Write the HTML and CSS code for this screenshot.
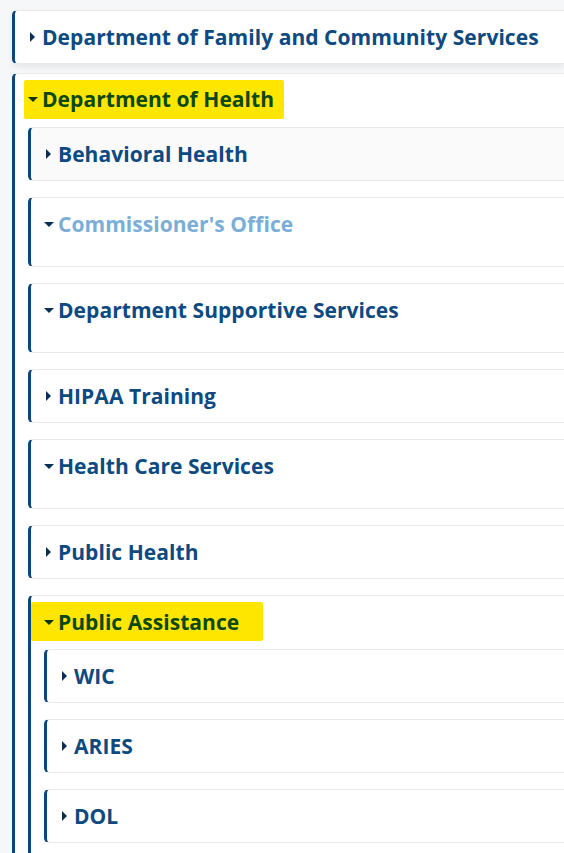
FILE: index.html
```html
<!DOCTYPE html>
<html>
<head>
  <meta charset="UTF-8">
  <title>Departments</title>
  <meta name="viewport" content="width=device-width, initial-scale=1.0">
  <link rel="stylesheet" href="styles.css">
</head>
<body>

<ul class="tree top">
  <li class="node raised">
    <div class="row"><span class="caret right"></span><span class="label">Department of Family and Community Services</span></div>
  </li>
  <li class="node open">
    <div class="row"><span class="hl"><span class="caret down"></span><span class="label">Department of Health</span></span></div>
    <ul class="tree sub">
      <li class="node hover">
        <div class="row"><span class="caret right"></span><span class="label">Behavioral Health</span></div>
      </li>
      <li class="node">
        <div class="row"><span class="caret down"></span><span class="label faded">Commissioner's Office</span></div>
        <div class="empty"></div>
      </li>
      <li class="node">
        <div class="row"><span class="caret down"></span><span class="label">Department Supportive Services</span></div>
        <div class="empty"></div>
      </li>
      <li class="node">
        <div class="row"><span class="caret right"></span><span class="label">HIPAA Training</span></div>
      </li>
      <li class="node">
        <div class="row"><span class="caret down"></span><span class="label">Health Care Services</span></div>
        <div class="empty"></div>
      </li>
      <li class="node">
        <div class="row"><span class="caret right"></span><span class="label">Public Health</span></div>
      </li>
      <li class="node open">
        <div class="row"><span class="hl flush"><span class="caret down"></span><span class="label">Public Assistance</span></span></div>
        <ul class="tree sub">
          <li class="node">
            <div class="row"><span class="caret right"></span><span class="label">WIC</span></div>
          </li>
          <li class="node">
            <div class="row"><span class="caret right"></span><span class="label">ARIES</span></div>
          </li>
          <li class="node">
            <div class="row"><span class="caret right"></span><span class="label">DOL</span></div>
          </li>
        </ul>
      </li>
    </ul>
  </li>
</ul>

</body>
</html>
```

FILE: styles.css
```css
html, body {
  margin: 0;
  padding: 0;
  background: #f6f7f9;
  font-family: "Open Sans", Arial, sans-serif;
  overflow: hidden;
}
.tree {
  list-style: none;
  margin: 0;
  padding: 0;
  display: flex;
  flex-direction: column;
  gap: 16px;
}
.tree.top {
  padding: 10px 0 0 12px;
  gap: 9px;
}
.tree.sub {
  margin-top: 8px;
  padding-left: 13px;
}
.node {
  background: #fff;
  border-left: 3px solid #0a4680;
  border-top: 1px solid #e8e9eb;
  border-bottom: 1px solid #e8e9eb;
  border-radius: 5px 0 0 5px;
}
.node.raised { box-shadow: 0 3px 6px rgba(0,0,0,0.07); }
.node.hover { background: #fafafa; }
.node.open { padding: 6px 0 30px; border-bottom: none; }
.row {
  display: flex;
  align-items: center;
  height: 52px;
  padding-left: 12px;
}
.node.open > .row { height: auto; padding-left: 9px; }
.caret {
  width: 11px;
  flex: none;
  display: flex;
  justify-content: center;
  align-items: center;
  margin-right: 4px;
}
.caret::before {
  content: "";
  width: 0;
  height: 0;
}
.caret.right::before {
  border-top: 5px solid transparent;
  border-bottom: 5px solid transparent;
  border-left: 5px solid #082f57;
}
.caret.down::before {
  border-left: 5px solid transparent;
  border-right: 5px solid transparent;
  border-top: 5px solid #082f57;
}
.label {
  font-size: 21px;
  line-height: 26px;
  font-weight: 700;
  color: #0d4a80;
  white-space: nowrap;
  letter-spacing: 0.05px;
}
.label.faded { color: #7aaed7; }
.empty { height: 16px; }
.hl {
  display: flex;
  align-items: center;
  background: #ffe600;
  padding: 6px 10px 7px 3px;
  border-radius: 2px;
}
.hl .label { color: #0b4812; }
.hl .caret.down::before { border-top-color: #0b3512; }
.node.open > .row .hl.flush {
  padding: 7px 24px 6px 12px;
}
.node.open > .row:has(.flush) { padding-left: 0; }
```
